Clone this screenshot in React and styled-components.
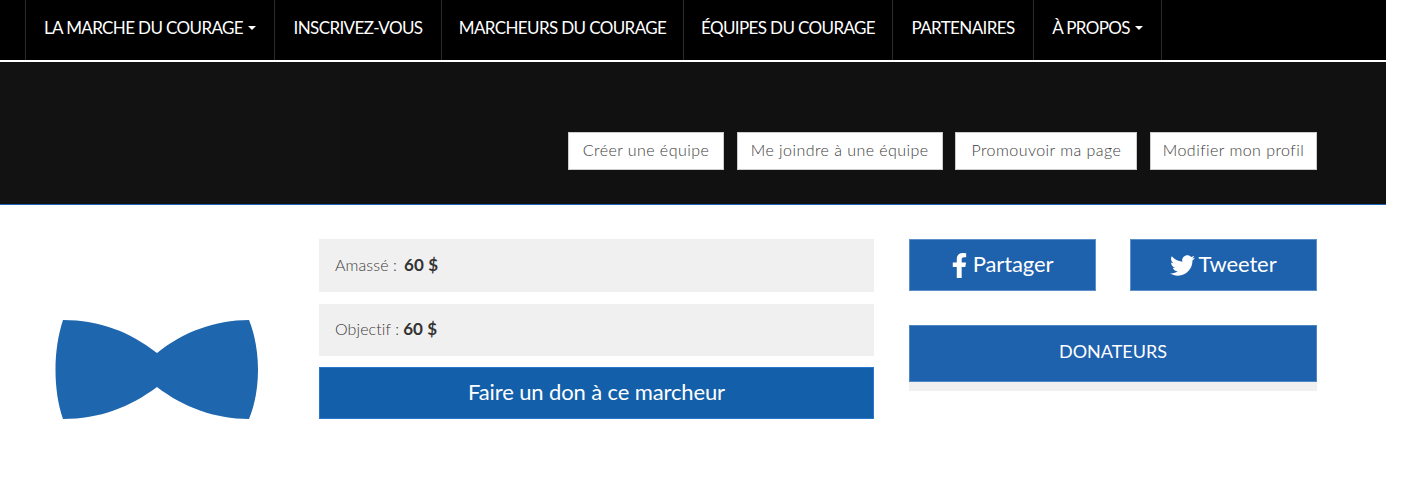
import React from 'react';
import styled, { createGlobalStyle } from 'styled-components';
import { FaFacebookF, FaTwitter } from 'react-icons/fa';

const GlobalStyle = createGlobalStyle`
  html, body {
    margin: 0;
    padding: 0;
    background: #ffffff;
    font-family: "Lato", "Open Sans", sans-serif;
  }
`;

const Page = styled.div`
  width: 1386px;
`;

const NavBar = styled.nav`
  height: 60px;
  background: #000000;
  border-bottom: 2px solid #ffffff;
  padding-left: 25px;
  display: flex;
`;

const NavItem = styled.a`
  width: ${props => props.$width}px;
  box-sizing: border-box;
  padding-bottom: 6px;
  display: flex;
  align-items: center;
  justify-content: center;
  gap: 5px;
  border-left: 1px solid #2b2b2b;
  color: #ffffff;
  font-size: 17px;
  letter-spacing: -0.62px;
  white-space: nowrap;
  text-transform: uppercase;
  &:last-child {
    border-right: 1px solid #2b2b2b;
  }
`;

const Caret = styled.span`
  width: 0;
  height: 0;
  margin-top: 2px;
  border-top: 4px solid #ffffff;
  border-left: 4px solid transparent;
  border-right: 4px solid transparent;
`;

const Banner = styled.header`
  height: 142px;
  background: linear-gradient(90deg, #121212 340px, #111111 340px);
  border-bottom: 1px solid #1c64b4;
  padding-right: 69px;
  display: flex;
  justify-content: flex-end;
  align-items: flex-start;
  gap: 12.67px;
`;

const BannerButton = styled.a`
  margin-top: 70px;
  width: ${props => props.$width}px;
  height: 38px;
  box-sizing: border-box;
  padding-bottom: 3px;
  display: flex;
  align-items: center;
  justify-content: center;
  background: #ffffff;
  border: 1px solid #cccccc;
  color: #3c3c3c;
  font-size: 16px;
  font-weight: 300;
  letter-spacing: 0.45px;
  white-space: nowrap;
`;

const Content = styled.main`
  display: flex;
  padding: 34px 69px 0 55px;
`;

const LogoCell = styled.div`
  width: 203px;
  padding-top: 81px;
`;

const Middle = styled.section`
  margin-left: 61px;
  width: 555px;
  display: flex;
  flex-direction: column;
`;

const StatRow = styled.div`
  height: ${props => props.$height}px;
  box-sizing: border-box;
  margin-bottom: 12px;
  padding: 0 0 3px 16px;
  background: #f0f0f0;
  display: flex;
  align-items: center;
  gap: ${props => props.$gap}px;
  color: #3c3c3c;
  font-size: 16px;
  font-weight: 300;
  letter-spacing: 0.1px;
  b {
    color: #333333;
    font-weight: 700;
    font-size: 17px;
  }
`;

const DonateButton = styled.a`
  height: 52px;
  box-sizing: border-box;
  margin-top: -1px;
  padding-bottom: 4px;
  display: flex;
  align-items: center;
  justify-content: center;
  background: #135faa;
  border: 1px solid #2a78cc;
  color: #ffffff;
  font-size: 22px;
  letter-spacing: -0.12px;
`;

const Side = styled.aside`
  margin-left: 35px;
  width: 408px;
  display: flex;
  flex-direction: column;
`;

const ShareRow = styled.div`
  display: flex;
  justify-content: space-between;
  margin-bottom: 34px;
`;

const ShareButton = styled.a`
  width: 187px;
  height: 52px;
  box-sizing: border-box;
  padding-right: ${props => props.$nudge}px;
  display: flex;
  align-items: center;
  justify-content: center;
  gap: ${props => props.$gap}px;
  background: #1e61ad;
  border: 1px solid #5c90ca;
  color: #ffffff;
  font-size: 22px;
  letter-spacing: -0.1px;
  svg {
    font-size: 25px;
  }
`;

const ShareLabel = styled.span`
  margin-bottom: 4px;
`;

const DonorsHeader = styled.div`
  height: 57px;
  box-sizing: border-box;
  padding-bottom: 5px;
  display: flex;
  align-items: center;
  justify-content: center;
  background: #1e61ad;
  border: 1px solid #4f86c4;
  color: #ffffff;
  font-size: 18px;
`;

const DonorsBody = styled.div`
  height: 9px;
  background: #f0f0f0;
`;

const navItems = [
  { label: 'La marche du courage', width: 249, caret: true },
  { label: 'Inscrivez-vous', width: 167 },
  { label: 'Marcheurs du courage', width: 242 },
  { label: 'Équipes du courage', width: 209 },
  { label: 'Partenaires', width: 141 },
  { label: 'À propos', width: 129, caret: true },
];

const bannerButtons = [
  { label: 'Créer une équipe', width: 156 },
  { label: 'Me joindre à une équipe', width: 206 },
  { label: 'Promouvoir ma page', width: 182 },
  { label: 'Modifier mon profil', width: 167 },
];

const BowTie = () => (
  <svg width="203" height="100" viewBox="0 0 203 100">
    <path
      fill="#1e66ae"
      d="M8 0 C45 0 75 12 102 33 C128 12 160 0 194 0 C206 30 206 70 194 99 C160 99 128 87 102 67 C75 87 45 99 8 99 C-2 70 -2 30 8 0 Z"
    />
  </svg>
);

const App = () => {
  return (
    <Page>
      <GlobalStyle />
      <NavBar>
        {navItems.map(item => (
          <NavItem key={item.label} $width={item.width}>
            {item.label}
            {item.caret && <Caret />}
          </NavItem>
        ))}
      </NavBar>
      <Banner>
        {bannerButtons.map(button => (
          <BannerButton key={button.label} $width={button.width}>{button.label}</BannerButton>
        ))}
      </Banner>
      <Content>
        <LogoCell>
          <BowTie />
        </LogoCell>
        <Middle>
          <StatRow $height={53} $gap={7}>Amassé : <b>60 $</b></StatRow>
          <StatRow $height={52} $gap={4}>Objectif : <b>60 $</b></StatRow>
          <DonateButton>Faire un don à ce marcheur</DonateButton>
        </Middle>
        <Side>
          <ShareRow>
            <ShareButton $gap={1} $nudge={5}><FaFacebookF /><ShareLabel>Partager</ShareLabel></ShareButton>
            <ShareButton $gap={3} $nudge={0}><FaTwitter /><ShareLabel>Tweeter</ShareLabel></ShareButton>
          </ShareRow>
          <DonorsHeader>DONATEURS</DonorsHeader>
          <DonorsBody />
        </Side>
      </Content>
    </Page>
  );
};

export default App;
